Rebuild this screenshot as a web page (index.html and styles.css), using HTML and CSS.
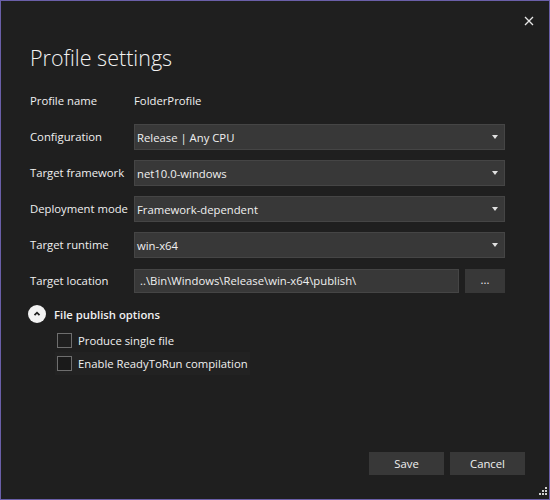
FILE: index.html
```html
<!DOCTYPE html>
<html>
<head>
<meta charset="utf-8">
<link rel="stylesheet" href="styles.css">
</head>
<body>
<div class="dialog">
  <div class="close">
    <svg width="10" height="10" viewBox="0 0 10 10"><path d="M1 1L9 9M9 1L1 9" stroke="#e8e8e8" stroke-width="1.3"/></svg>
  </div>
  <h1 class="title">Profile settings</h1>
  <div class="form">
    <div class="label">Profile name</div>
    <div class="value">FolderProfile</div>

    <div class="label">Configuration</div>
    <div class="combo"><span>Release | Any CPU</span><i class="arrow"></i></div>

    <div class="label">Target framework</div>
    <div class="combo"><span>net10.0-windows</span><i class="arrow"></i></div>

    <div class="label">Deployment mode</div>
    <div class="combo"><span>Framework-dependent</span><i class="arrow"></i></div>

    <div class="label">Target runtime</div>
    <div class="combo"><span>win-x64</span><i class="arrow"></i></div>

    <div class="label">Target location</div>
    <div class="location">
      <div class="input">..\Bin\Windows\Release\win-x64\publish\</div>
      <div class="browse">...</div>
    </div>
  </div>

  <div class="section">
    <div class="expander">
      <span class="circle">
        <svg width="10" height="10" viewBox="0 0 10 10"><path d="M2.5 6.2L5 3.7L7.5 6.2" fill="none" stroke="#1f1f1f" stroke-width="1.8"/></svg>
      </span>
      <span class="section-title">File publish options</span>
    </div>
    <div class="checks">
      <label class="check"><span class="box"></span><span>Produce single file</span></label>
      <label class="check focus"><span class="box"></span><span>Enable ReadyToRun compilation</span></label>
    </div>
  </div>

  <div class="footer">
    <div class="btn">Save</div>
    <div class="btn">Cancel</div>
  </div>
  <div class="grip">
    <svg width="10" height="10" viewBox="0 0 10 10" fill="#d0d0d0">
      <rect x="8" y="0" width="2" height="2"/>
      <rect x="5" y="3" width="2" height="2"/><rect x="8" y="3" width="2" height="2"/>
      <rect x="2" y="6" width="2" height="2"/><rect x="5" y="6" width="2" height="2"/><rect x="8" y="6" width="2" height="2"/>
    </svg>
  </div>
</div>
</body>
</html>
```

FILE: styles.css
```css
* { box-sizing: border-box; }
html, body { margin: 0; padding: 0; background: #1f1f1f; }
body {
  font-family: "Open Sans", "Noto Sans", "Liberation Sans", sans-serif;
  font-size: 11.3px;
  color: #f0f0f0;
}
.dialog {
  position: relative;
  width: 550px;
  height: 500px;
  border: 1px solid #6a5fa8;
  background: #1f1f1f;
  padding: 0 44px 0 29px;
  display: flex;
  flex-direction: column;
}
.close {
  position: absolute;
  top: 15px;
  right: 15px;
  width: 10px;
  height: 10px;
  display: flex;
}
.title {
  margin: 41px 0 0 0;
  height: 46px;
  font-weight: 300;
  font-size: 21.5px;
  line-height: 32px;
  color: #f2f2f2;
  letter-spacing: 0;
}
.form {
  display: grid;
  grid-template-columns: 104px 1fr;
  grid-auto-rows: 26px;
  row-gap: 10px;
  align-items: center;
}
.label, .value { line-height: 26px; white-space: nowrap; }
.combo {
  height: 26px;
  background: #383838;
  border: 1px solid #454545;
  display: flex;
  align-items: center;
  justify-content: space-between;
  padding: 0 6px 0 2px;
}
.arrow {
  width: 0; height: 0;
  border-left: 3.5px solid transparent;
  border-right: 3.5px solid transparent;
  border-top: 4px solid #e0e0e0;
}
.location {
  display: flex;
  gap: 6px;
  height: 24px;
  align-self: center;
}
.input {
  flex: 1;
  background: #383838;
  border: 1px solid #454545;
  line-height: 22px;
  padding: 0 5px;
  white-space: nowrap;
}
.browse {
  width: 40px;
  background: #383838;
  line-height: 22px;
  text-align: center;
}
.section { margin-top: 8px; }
.expander {
  display: flex;
  align-items: center;
  gap: 8px;
  height: 24px;
  margin-left: -2px;
}
.circle {
  width: 18px; height: 18px;
  border-radius: 50%;
  background: #f2f2f2;
  display: flex;
  align-items: center;
  justify-content: center;
}
.section-title { font-weight: 600; }
.checks {
  display: flex;
  flex-direction: column;
  margin-left: 25px;
  margin-top: 3px;
}
.check {
  display: flex;
  align-items: center;
  gap: 6px;
  height: 23px;
  padding-left: 2px;
  white-space: nowrap;
}
.check.focus {
  width: 195px;
  background: #222222;
}
.box {
  width: 15px; height: 15px;
  border: 1px solid #6e6e6e;
  background: #1f1f1f;
  flex: none;
}
.focus .box { background: #1a1a1a; }
.footer {
  margin-top: auto;
  margin-bottom: 24px;
  margin-right: -20px;
  display: flex;
  justify-content: flex-end;
  gap: 6px;
}
.btn {
  width: 75px;
  height: 23px;
  background: #383838;
  line-height: 23px;
  text-align: center;
}
.grip {
  position: absolute;
  right: 2px;
  bottom: 2px;
  width: 10px;
  height: 10px;
  display: flex;
}
```
